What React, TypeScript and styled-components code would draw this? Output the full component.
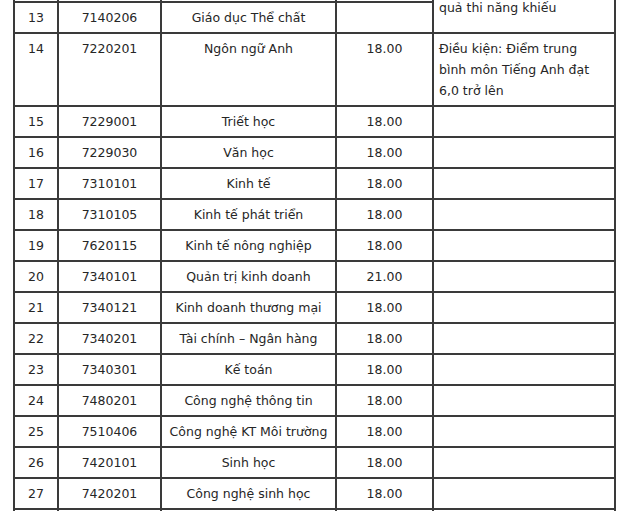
import React from 'react';
import styled, { createGlobalStyle } from 'styled-components';

const GlobalStyle = createGlobalStyle`
  html, body {
    margin: 0;
    padding: 0;
    background: #ffffff;
  }
`;

const Page = styled.div`
  width: 632px;
  height: 511px;
  overflow: hidden;
  background: #fff;
`;

const Table = styled.table`
  margin: -30px 0 0 13px;
  width: 603px;
  table-layout: fixed;
  border-collapse: collapse;
  font-family: 'DejaVu Sans', Verdana, sans-serif;
  font-size: 12.5px;
  line-height: 21px;
  color: #262626;
`;

const Cell = styled.td<{ $align?: 'left' | 'center' }>`
  border: 2px solid #3a3a3a;
  padding: 4px 4px;
  vertical-align: top;
  text-align: ${p => p.$align ?? 'center'};
  white-space: nowrap;
`;

const NoteCell = styled(Cell)`
  white-space: normal;
  padding-left: 5px;
`;

type Row = { no: number; code: string; name: string; score: string };

const rows: Row[] = [
  { no: 14, code: '7220201', name: 'Ngôn ngữ Anh', score: '18.00' },
  { no: 15, code: '7229001', name: 'Triết học', score: '18.00' },
  { no: 16, code: '7229030', name: 'Văn học', score: '18.00' },
  { no: 17, code: '7310101', name: 'Kinh tế', score: '18.00' },
  { no: 18, code: '7310105', name: 'Kinh tế phát triển', score: '18.00' },
  { no: 19, code: '7620115', name: 'Kinh tế nông nghiệp', score: '18.00' },
  { no: 20, code: '7340101', name: 'Quản trị kinh doanh', score: '21.00' },
  { no: 21, code: '7340121', name: 'Kinh doanh thương mại', score: '18.00' },
  { no: 22, code: '7340201', name: 'Tài chính – Ngân hàng', score: '18.00' },
  { no: 23, code: '7340301', name: 'Kế toán', score: '18.00' },
  { no: 24, code: '7480201', name: 'Công nghệ thông tin', score: '18.00' },
  { no: 25, code: '7510406', name: 'Công nghệ KT Môi trường', score: '18.00' },
  { no: 26, code: '7420101', name: 'Sinh học', score: '18.00' },
  { no: 27, code: '7420201', name: 'Công nghệ sinh học', score: '18.00' },
];

export default function App() {
  return (
    <Page>
      <GlobalStyle />
      <Table>
        <colgroup>
          <col style={{ width: 44 }} />
          <col style={{ width: 103 }} />
          <col style={{ width: 175 }} />
          <col style={{ width: 97 }} />
          <col style={{ width: 182 }} />
        </colgroup>
        <tbody>
          {/* row 12 lies above the visible area; only its bottom line shows */}
          <tr>
            <Cell>&nbsp;</Cell>
            <Cell />
            <Cell />
            <Cell />
            <NoteCell $align="left" rowSpan={2}>
              &nbsp;
              <br />
              quả thi năng khiếu
            </NoteCell>
          </tr>
          <tr>
            <Cell>13</Cell>
            <Cell>7140206</Cell>
            <Cell>Giáo dục Thể chất</Cell>
            <Cell />
          </tr>
          {rows.map(r => (
            <tr key={r.no}>
              <Cell>{r.no}</Cell>
              <Cell>{r.code}</Cell>
              <Cell>{r.name}</Cell>
              <Cell>{r.score}</Cell>
              {r.no === 14 ? (
                <NoteCell $align="left">
                  Điều kiện: Điểm trung
                  <br />
                  bình môn Tiếng Anh đạt
                  <br />
                  6,0 trở lên
                </NoteCell>
              ) : (
                <Cell $align="left" />
              )}
            </tr>
          ))}
          <tr>
            <Cell>&nbsp;</Cell>
            <Cell />
            <Cell />
            <Cell />
            <Cell />
          </tr>
        </tbody>
      </Table>
    </Page>
  );
}
